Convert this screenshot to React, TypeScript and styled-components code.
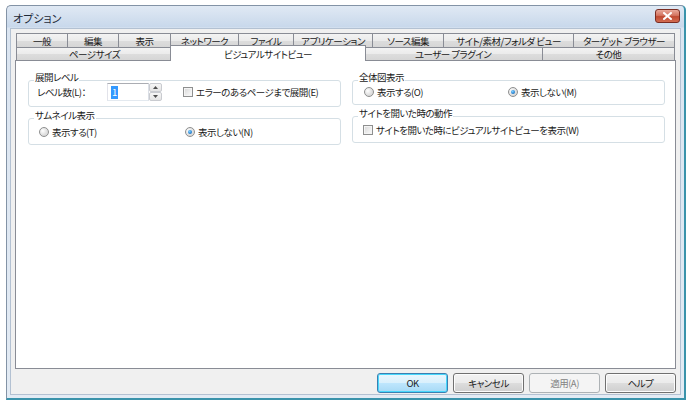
import React from 'react';
import styled, {createGlobalStyle, css} from 'styled-components';

const GlobalStyle = createGlobalStyle`
	html, body {
		margin: 0;
		padding: 0;
		background: #ffffff;
	}
	body {
		font-family: "Noto Sans CJK JP", "Noto Sans", sans-serif;
		font-size: 9.5px;
		letter-spacing: -0.5px;
		font-feature-settings: "palt";
		color: #1a1a1a;
	}
`;

const Window = styled.div`
	box-sizing: border-box;
	width: 680px;
	height: 395px;
	margin: 5px 0 0 6px;
	display: flex;
	flex-direction: column;
	padding: 0 3px 3px 3px;
	border: 1px solid #8393a6;
	border-right: 2px solid #3a93ab;
	border-bottom: 2px solid #3a93ab;
	border-radius: 5px 5px 0 0;
	background: linear-gradient(to bottom, #e0e9f4 0, #c8d8eb 21px, #dbe5f1 22px, #e3ebf4 100%);
`;

const TitleBar = styled.div`
	height: 22px;
	display: flex;
	align-items: flex-start;
	justify-content: space-between;
`;

const Title = styled.span`
	margin: 6px 0 0 3px;
	font-size: 11px;
	letter-spacing: 0;
	line-height: 13px;
	color: #1e2a38;
`;

const CloseButton = styled.div`
	box-sizing: border-box;
	width: 25px;
	height: 14px;
	margin: 3px 1px 0 0;
	border: 1px solid #7a2c22;
	border-radius: 3px;
	background: linear-gradient(to bottom, #e9a99b 0, #d47561 45%, #c04a32 55%, #d26c51 100%);
	display: flex;
	align-items: center;
	justify-content: center;
`;

const Client = styled.div`
	flex: 1;
	box-sizing: border-box;
	display: flex;
	flex-direction: column;
	padding: 4px 4px 1px 4px;
	background: #f0f0f0;
	border: 1px solid #b3c1d2;
`;

const TabStrip = styled.div`
	margin-left: 1px;
	display: flex;
	flex-direction: column;
`;

const TabRow = styled.div<{$h: number}>`
	display: flex;
	height: ${p => p.$h}px;
`;

const Tab = styled.div<{$w: number; $active?: boolean}>`
	box-sizing: border-box;
	width: ${p => p.$w + 1}px;
	margin-right: -1px;
	border: 1px solid #898c95;
	border-bottom: none;
	background: linear-gradient(to bottom, #f3f3f3 0, #ebebeb 50%, #dddddd 51%, #d6d6d6 100%);
	display: flex;
	align-items: center;
	justify-content: center;
	line-height: 12px;
	white-space: nowrap;
	overflow: hidden;
	${p => p.$active && css`
		position: relative;
		z-index: 1;
		width: ${p.$w + 5}px;
		margin: -2px -3px -1px -2px;
		background: #ffffff;
		padding: 1px 0 0 0;
	`}
`;

const Panel = styled.div`
	flex: 1;
	box-sizing: border-box;
	border: 1px solid #898c95;
	background: #ffffff;
	padding: 10px 10px 0 12px;
`;

const Columns = styled.div`
	display: grid;
	grid-template-columns: 313px 313px;
	column-gap: 11px;
	align-items: start;
`;

const Column = styled.div`
	display: flex;
	flex-direction: column;
	gap: 2px;
`;

const Group = styled.fieldset`
	margin: 0;
	padding: 0;
	min-width: 0;
	border: 1px solid #d5dfe5;
	border-radius: 3px;
`;

const Legend = styled.legend`
	margin-left: 5px;
	padding: 0 1px 6px 1px;
	line-height: 12px;
`;

const Row = styled.div<{$pt: number; $pl: number}>`
	display: flex;
	align-items: center;
	margin-top: -8px;
	padding: ${p => p.$pt}px 0 5px ${p => p.$pl}px;
	min-height: 15px;
	line-height: 12px;
	white-space: nowrap;
`;

const Item = styled.label<{$w?: number}>`
	display: flex;
	align-items: center;
	gap: 3px;
	${p => p.$w && css`width: ${p.$w}px;`}
`;

const FieldLabel = styled.span`
	width: 70px;
`;

const NumberBox = styled.div`
	box-sizing: border-box;
	width: 42px;
	height: 18px;
	border: 1px solid #abadb3;
	border-color: #abadb3 #dbdfe6 #e3e9ef #e2e3ea;
	background: #ffffff;
	display: flex;
	align-items: center;
	padding-left: 3px;
`;

const Selected = styled.span`
	background: #3399ff;
	color: #ffffff;
	line-height: 13px;
	padding: 0 1px;
`;

const Spinner = styled.div`
	display: flex;
	flex-direction: column;
	width: 13px;
	height: 18px;
	margin-right: 21px;
`;

const SpinHalf = styled.div`
	flex: 1;
	box-sizing: border-box;
	border: 1px solid #c9cbd0;
	border-radius: 2px;
	background: linear-gradient(to bottom, #f6f6f6, #e4e4e4);
	display: flex;
	align-items: center;
	justify-content: center;
`;

const CheckBox = styled.span`
	box-sizing: border-box;
	width: 10px;
	height: 10px;
	border: 1px solid #8e8f8f;
	background: linear-gradient(135deg, #d6d6d6 0, #eeeeee 60%, #fbfbfb 100%);
	box-shadow: inset 0 0 0 1px #f4f4f4;
`;

const Radio = styled.span<{$on?: boolean}>`
	box-sizing: border-box;
	width: 10px;
	height: 10px;
	border-radius: 50%;
	border: 1px solid #8e8f8f;
	background: radial-gradient(circle at 35% 35%, #ffffff 0, #e2e2e2 50%, #cfcfcf 100%);
	display: flex;
	align-items: center;
	justify-content: center;
	&::after {
		content: '';
		display: ${p => (p.$on ? 'block' : 'none')};
		width: 4px;
		height: 4px;
		border-radius: 50%;
		background: radial-gradient(circle at 40% 35%, #7fd0ff 0, #2f8ad8 55%, #14508d 100%);
	}
`;

const ButtonBar = styled.div`
	display: flex;
	justify-content: flex-end;
	gap: 5px;
	margin-top: 4px;
`;

const Button = styled.div<{$kind?: 'default' | 'disabled'}>`
	box-sizing: border-box;
	width: 71px;
	height: 20px;
	border: 1px solid #707070;
	border-radius: 3px;
	background: linear-gradient(to bottom, #f2f2f2 0, #ebebeb 50%, #dddddd 51%, #cfcfcf 100%);
	box-shadow: inset 0 0 0 1px #fcfcfc;
	display: flex;
	align-items: center;
	justify-content: center;
	line-height: 12px;
	${p => p.$kind === 'default' && css`
		border-color: #3c7fb1;
		background: linear-gradient(to bottom, #eaf6fd 0, #d9f0fc 50%, #bee6fd 51%, #a7d9f5 100%);
		box-shadow: inset 0 0 0 1px #48d7fb;
	`}
	${p => p.$kind === 'disabled' && css`
		border-color: #adb2b5;
		background: #f4f4f4;
		box-shadow: none;
		color: #838383;
	`}
`;

const row1: [string, number][] = [
	['一般', 51], ['編集', 51], ['表示', 52], ['ネットワーク', 68], ['ファイル', 55],
	['アプリケーション', 79], ['ソース編集', 71], ['サイト/素材/フォルダ ビュー', 130], ['ターゲット ブラウザー', 101],
];

const row2: [string, number][] = [
	['ページサイズ', 156], ['ビジュアルサイトビュー', 191], ['ユーザー プラグイン', 179], ['その他', 132],
];

const Arrow = ({up}: {up?: boolean}) => (
	<svg width="5" height="3" viewBox="0 0 5 3">
		<path d={up ? 'M0 3 L2.5 0 L5 3 Z' : 'M0 0 L2.5 3 L5 0 Z'} fill="#4d4d4d"/>
	</svg>
);

export default function App() {
	return (
		<>
			<GlobalStyle/>
			<Window>
				<TitleBar>
					<Title>オプション</Title>
					<CloseButton>
						<svg width="9" height="8" viewBox="0 0 9 8">
							<path d="M1 1 L8 7 M8 1 L1 7" stroke="#ffffff" strokeWidth="2" strokeLinecap="square"/>
						</svg>
					</CloseButton>
				</TitleBar>
				<Client>
					<TabStrip>
						<TabRow $h={14}>
							{row1.map(([label, w]) => <Tab key={label} $w={w}>{label}</Tab>)}
						</TabRow>
						<TabRow $h={13}>
							{row2.map(([label, w], i) => <Tab key={label} $w={w} $active={i === 1}>{label}</Tab>)}
						</TabRow>
					</TabStrip>

					<Panel>
						<Columns>
							<Column>
								<Group>
									<Legend>展開レベル</Legend>
									<Row $pt={2} $pl={8}>
										<FieldLabel>レベル数(L)：</FieldLabel>
										<NumberBox><Selected>1</Selected></NumberBox>
										<Spinner>
											<SpinHalf><Arrow up/></SpinHalf>
											<SpinHalf><Arrow/></SpinHalf>
										</Spinner>
										<Item><CheckBox/>エラーのあるページまで展開(E)</Item>
									</Row>
								</Group>
								<Group>
									<Legend>サムネイル表示</Legend>
									<Row $pt={5} $pl={10}>
										<Item $w={146}><Radio/>表示する(T)</Item>
										<Item><Radio $on/>表示しない(N)</Item>
									</Row>
								</Group>
							</Column>

							<Column>
								<Group>
									<Legend>全体図表示</Legend>
									<Row $pt={3} $pl={11}>
										<Item $w={144}><Radio/>表示する(O)</Item>
										<Item><Radio $on/>表示しない(M)</Item>
									</Row>
								</Group>
								<Group>
									<Legend>サイトを開いた時の動作</Legend>
									<Row $pt={5} $pl={10}>
										<Item><CheckBox/>サイトを開いた時にビジュアルサイトビューを表示(W)</Item>
									</Row>
								</Group>
							</Column>
						</Columns>
					</Panel>

					<ButtonBar>
						<Button $kind="default">OK</Button>
						<Button>キャンセル</Button>
						<Button $kind="disabled">適用(A)</Button>
						<Button>ヘルプ</Button>
					</ButtonBar>
				</Client>
			</Window>
		</>
	);
}
